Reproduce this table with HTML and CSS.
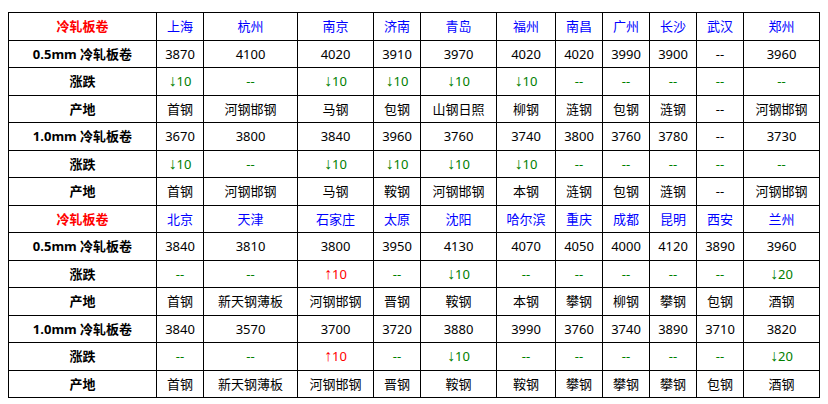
FILE: index.html
```html
<!DOCTYPE html>
<html lang="zh">
<head>
<meta charset="utf-8">
<link rel="stylesheet" href="styles.css">
</head>
<body>
<table class="price">
<colgroup>
<col class="c-label"><col class="c47"><col class="c94"><col class="c76"><col class="c47"><col class="c76"><col class="c59"><col class="c47"><col class="c47"><col class="c47"><col class="c47"><col class="c76">
</colgroup>
<tbody>
<tr class="head"><th class="title">冷轧板卷</th><td>上海</td><td>杭州</td><td>南京</td><td>济南</td><td>青岛</td><td>福州</td><td>南昌</td><td>广州</td><td>长沙</td><td>武汉</td><td>郑州</td></tr>
<tr><th>0.5mm 冷轧板卷</th><td>3870</td><td>4100</td><td>4020</td><td>3910</td><td>3970</td><td>4020</td><td>4020</td><td>3990</td><td>3900</td><td>--</td><td>3960</td></tr>
<tr class="chg"><th>涨跌</th><td class="dn"><span class="arr">↓</span>10</td><td>--</td><td class="dn"><span class="arr">↓</span>10</td><td class="dn"><span class="arr">↓</span>10</td><td class="dn"><span class="arr">↓</span>10</td><td class="dn"><span class="arr">↓</span>10</td><td>--</td><td>--</td><td>--</td><td>--</td><td>--</td></tr>
<tr><th>产地</th><td>首钢</td><td>河钢邯钢</td><td>马钢</td><td>包钢</td><td>山钢日照</td><td>柳钢</td><td>涟钢</td><td>包钢</td><td>涟钢</td><td>--</td><td>河钢邯钢</td></tr>
<tr><th>1.0mm 冷轧板卷</th><td>3670</td><td>3800</td><td>3840</td><td>3960</td><td>3760</td><td>3740</td><td>3800</td><td>3760</td><td>3780</td><td>--</td><td>3730</td></tr>
<tr class="chg"><th>涨跌</th><td class="dn"><span class="arr">↓</span>10</td><td>--</td><td class="dn"><span class="arr">↓</span>10</td><td class="dn"><span class="arr">↓</span>10</td><td class="dn"><span class="arr">↓</span>10</td><td class="dn"><span class="arr">↓</span>10</td><td>--</td><td>--</td><td>--</td><td>--</td><td>--</td></tr>
<tr><th>产地</th><td>首钢</td><td>河钢邯钢</td><td>马钢</td><td>鞍钢</td><td>河钢邯钢</td><td>本钢</td><td>涟钢</td><td>包钢</td><td>涟钢</td><td>--</td><td>河钢邯钢</td></tr>
<tr class="head"><th class="title">冷轧板卷</th><td>北京</td><td>天津</td><td>石家庄</td><td>太原</td><td>沈阳</td><td>哈尔滨</td><td>重庆</td><td>成都</td><td>昆明</td><td>西安</td><td>兰州</td></tr>
<tr><th>0.5mm 冷轧板卷</th><td>3840</td><td>3810</td><td>3800</td><td>3950</td><td>4130</td><td>4070</td><td>4050</td><td>4000</td><td>4120</td><td>3890</td><td>3960</td></tr>
<tr class="chg"><th>涨跌</th><td>--</td><td>--</td><td class="up"><span class="arr">↑</span>10</td><td>--</td><td class="dn"><span class="arr">↓</span>10</td><td>--</td><td>--</td><td>--</td><td>--</td><td>--</td><td class="dn"><span class="arr">↓</span>20</td></tr>
<tr><th>产地</th><td>首钢</td><td>新天钢薄板</td><td>河钢邯钢</td><td>晋钢</td><td>鞍钢</td><td>本钢</td><td>攀钢</td><td>柳钢</td><td>攀钢</td><td>包钢</td><td>酒钢</td></tr>
<tr><th>1.0mm 冷轧板卷</th><td>3840</td><td>3570</td><td>3700</td><td>3720</td><td>3880</td><td>3990</td><td>3760</td><td>3740</td><td>3890</td><td>3710</td><td>3820</td></tr>
<tr class="chg"><th>涨跌</th><td>--</td><td>--</td><td class="up"><span class="arr">↑</span>10</td><td>--</td><td class="dn"><span class="arr">↓</span>10</td><td>--</td><td>--</td><td>--</td><td>--</td><td>--</td><td class="dn"><span class="arr">↓</span>20</td></tr>
<tr><th>产地</th><td>首钢</td><td>新天钢薄板</td><td>河钢邯钢</td><td>晋钢</td><td>鞍钢</td><td>鞍钢</td><td>攀钢</td><td>攀钢</td><td>攀钢</td><td>包钢</td><td>酒钢</td></tr>
</tbody>
</table>
</body>
</html>
```
FILE: styles.css
```css
html, body {
  background: #fff;
}
body {
  margin: 12px 8px 8px 8px;
  font-family: "Noto Sans", "Noto Sans CJK SC", sans-serif;
  font-size: 13px;
  color: #000;
}
.price {
  border-collapse: collapse;
  table-layout: fixed;
  width: 812px;
}
.c-label { width: 148px; }
.c47 { width: 47px; }
.c59 { width: 59px; }
.c76 { width: 76px; }
.c94 { width: 94px; }
.price tr {
  height: 27.5px;
}
.price th,
.price td {
  border: 1px solid #000;
  padding: 0;
  text-align: center;
  vertical-align: middle;
  white-space: nowrap;
  line-height: 16px;
}
.price th {
  font-weight: bold;
}
.price .head td {
  color: #0000ff;
}
.price .head .title {
  color: #ff0000;
}
.price .chg td {
  color: #008000;
}
.price .chg td.up {
  color: #ff0000;
}
.arr {
  font-family: "Liberation Sans", sans-serif;
  font-size: 16px;
  line-height: 14px;
}
```
